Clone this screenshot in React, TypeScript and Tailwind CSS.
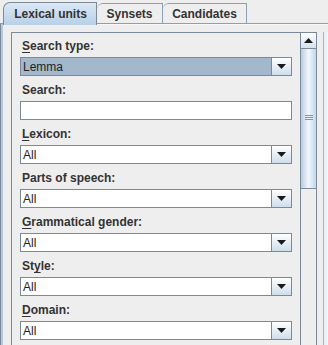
import React from "react";

const fields = [
  { label: "Search type:", mnemonic: 0, kind: "focus", value: "Lemma" },
  { label: "Search:", mnemonic: -1, kind: "text", value: "" },
  { label: "Lexicon:", mnemonic: 0, kind: "combo", value: "All" },
  { label: "Parts of speech:", mnemonic: -1, kind: "combo", value: "All" },
  { label: "Grammatical gender:", mnemonic: 0, kind: "combo", value: "All" },
  { label: "Style:", mnemonic: 2, kind: "combo", value: "All" },
  { label: "Domain:", mnemonic: 0, kind: "combo", value: "All" },
];

function Label({ text, mnemonic }: { text: string; mnemonic: number }) {
  if (mnemonic < 0) return <>{text}</>;
  return (
    <>
      {text.slice(0, mnemonic)}
      <span className="underline underline-offset-[2px] decoration-[1px]">{text[mnemonic]}</span>
      {text.slice(mnemonic + 1)}
    </>
  );
}

function ArrowButton() {
  return (
    <div className="w-[20px] h-full border-l border-[#7a8a99] bg-gradient-to-b from-[#ffffff] to-[#cfdeec] flex items-center justify-center">
      <svg width="9" height="5" viewBox="0 0 9 5">
        <path d="M0 0 H9 L4.5 5 Z" fill="#1a1a1a" />
      </svg>
    </div>
  );
}

export default function App() {
  return (
    <div className="w-[328px] h-[345px] overflow-hidden bg-[#eeeeee] flex flex-col font-['Liberation_Sans',Arial,sans-serif] text-[#333333]">
      {/* tab strip */}
      <div className="h-[24px] flex items-end">
        <div className="w-[3px] h-full border-b border-[#8da0b3]" />
        <div className="w-[94px] h-[23px] -mb-px relative z-10 rounded-tl-[7px] border border-b-0 border-[#7a8a99] bg-gradient-to-b from-[#dbe8f5] to-[#b9d0e6] flex items-center justify-center pl-[1px] text-[12px] font-bold leading-none">
          Lexical units
        </div>
        <div className="w-[66px] h-[21px] rounded-tl-[6px] border border-l-0 border-[#8da0b3] bg-[#eeeeee] flex items-center justify-center text-[12px] font-bold leading-none">
          Synsets
        </div>
        <div className="w-[84px] h-[21px] rounded-tl-[6px] border border-l-0 border-[#8da0b3] bg-[#eeeeee] flex items-center justify-center text-[12px] font-bold leading-none">
          Candidates
        </div>
        <div className="flex-1 h-full border-b border-[#8da0b3]" />
      </div>

      {/* content */}
      <div className="flex-1 min-h-0 flex">
        <div className="w-[3px] bg-[#b3c9df] border-l border-[#7a8a99]" />
        <div className="flex-1 min-h-0 flex pt-[7px] pl-[8px] border-t border-[#f7f9fb]">
          <div className="w-[306px] border border-b-0 border-[#7a8a99] flex min-h-0 bg-[#eeeeee]">
            <div className="w-[288px] px-[8px] overflow-hidden">
              {fields.map((f, i) => (
                <div key={f.label}>
                  <div
                    className={`${i === 0 ? "h-[24px] pt-[6px]" : "h-[25px] pt-[7px]"} text-[12px] leading-[14px] font-bold pl-[2px]`}
                  >
                    <Label text={f.label} mnemonic={f.mnemonic} />
                  </div>
                  {f.kind === "text" ? (
                    <div className="h-[19px] border border-[#7a8a99] bg-white" />
                  ) : (
                    <div className="h-[19px] border border-[#7a8a99] flex">
                      <div
                        className={`flex-1 flex items-center pl-[2px] text-[12px] leading-none ${
                          f.kind === "focus" ? "bg-[#a3b8cc] text-[#222222]" : "bg-white text-[#222222]"
                        }`}
                      >
                        {f.value}
                      </div>
                      <ArrowButton />
                    </div>
                  )}
                </div>
              ))}
            </div>

            {/* scrollbar */}
            <div className="w-[16px] border-l border-[#7a8a99] flex flex-col bg-[#eeeeee]">
              <div className="h-[16px] border-b border-[#7a8a99] bg-gradient-to-b from-[#ffffff] to-[#d4e2f0] flex items-center justify-center">
                <svg width="9" height="5" viewBox="0 0 9 5">
                  <path d="M0 5 H9 L4.5 0 Z" fill="#1a1a1a" />
                </svg>
              </div>
              <div className="h-[140px] border-b border-[#7a8a99] bg-gradient-to-r from-[#b7cde3] via-[#f2f7fc] to-[#c3d6ea] flex items-center justify-center pt-[-2px]">
                <div className="flex flex-col gap-[1px] -mt-[2px]">
                  <div className="w-[8px] h-px bg-[#7f97b3]" />
                  <div className="w-[8px] h-px bg-[#7f97b3]" />
                  <div className="w-[8px] h-px bg-[#7f97b3]" />
                </div>
              </div>
              <div className="flex-1" />
            </div>
          </div>

          {/* right edge */}
          <div className="flex-1 flex">
            <div className="w-[6px]" />
            <div className="w-px bg-[#a9b8c7]" />
            <div className="flex-1 bg-gradient-to-r from-[#e4edf6] to-[#f4f7fb]" />
          </div>
        </div>
      </div>
    </div>
  );
}
